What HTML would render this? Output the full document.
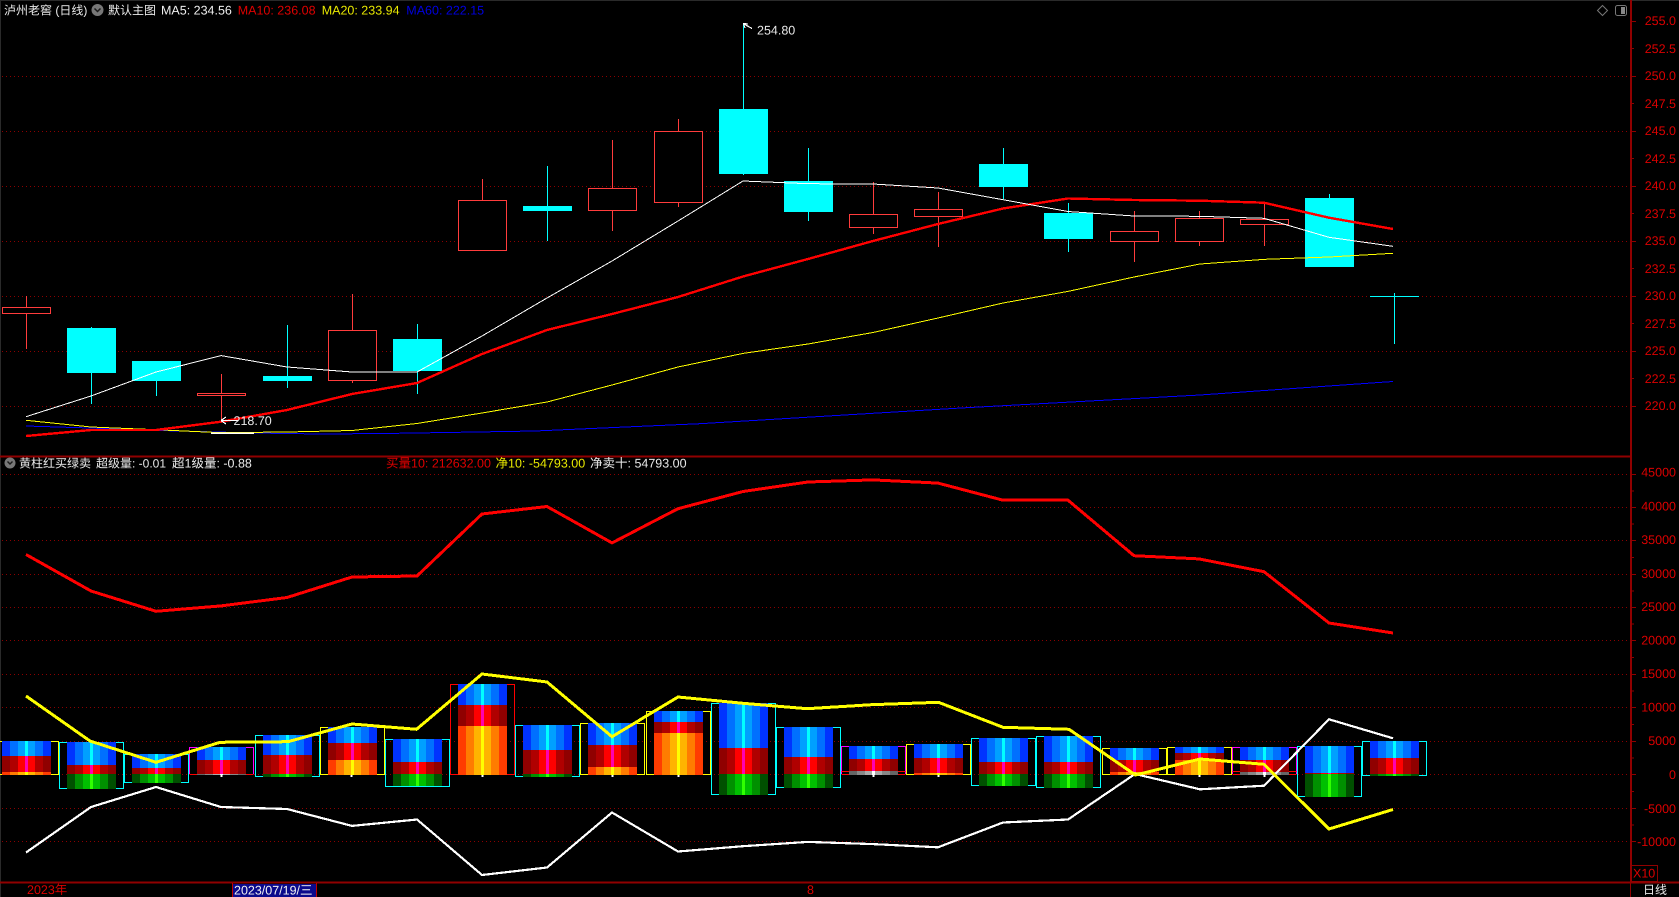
<!DOCTYPE html>
<html><head><meta charset="utf-8"><style>
html,body{margin:0;padding:0;background:#000;width:1679px;height:897px;overflow:hidden}
svg{display:block;shape-rendering:crispEdges}
text{font-family:"Liberation Sans","Noto Sans CJK SC",sans-serif;font-size:12.5px;text-rendering:geometricPrecision;shape-rendering:auto}
.c{font-size:12px}
.a text{fill:#dc0000;text-anchor:end}
</style></head><body>
<svg width="1679" height="897" viewBox="0 0 1679 897" xmlns="http://www.w3.org/2000/svg">
<defs>
<linearGradient id="b"><stop offset="0" stop-color="#0033ff"/><stop offset=".163" stop-color="#0033ff"/><stop offset=".163" stop-color="#0070ff"/><stop offset=".327" stop-color="#0070ff"/><stop offset=".327" stop-color="#00a0ff"/><stop offset=".47" stop-color="#00a0ff"/><stop offset=".47" stop-color="#00ffff"/><stop offset=".53" stop-color="#00ffff"/><stop offset=".53" stop-color="#00a0ff"/><stop offset=".673" stop-color="#00a0ff"/><stop offset=".673" stop-color="#0070ff"/><stop offset=".837" stop-color="#0070ff"/><stop offset=".837" stop-color="#0033ff"/><stop offset="1" stop-color="#0033ff"/></linearGradient>
<linearGradient id="r"><stop offset="0" stop-color="#900000"/><stop offset=".163" stop-color="#900000"/><stop offset=".163" stop-color="#b00000"/><stop offset=".327" stop-color="#b00000"/><stop offset=".327" stop-color="#ff0000"/><stop offset=".47" stop-color="#ff0000"/><stop offset=".47" stop-color="#ff00b0"/><stop offset=".53" stop-color="#ff00b0"/><stop offset=".53" stop-color="#ff0000"/><stop offset=".673" stop-color="#ff0000"/><stop offset=".673" stop-color="#b00000"/><stop offset=".837" stop-color="#b00000"/><stop offset=".837" stop-color="#900000"/><stop offset="1" stop-color="#900000"/></linearGradient>
<linearGradient id="o"><stop offset="0" stop-color="#ff3c00"/><stop offset=".163" stop-color="#ff3c00"/><stop offset=".163" stop-color="#ff7c00"/><stop offset=".327" stop-color="#ff7c00"/><stop offset=".327" stop-color="#ffb400"/><stop offset=".47" stop-color="#ffb400"/><stop offset=".47" stop-color="#ffff00"/><stop offset=".53" stop-color="#ffff00"/><stop offset=".53" stop-color="#ffb400"/><stop offset=".673" stop-color="#ffb400"/><stop offset=".673" stop-color="#ff7c00"/><stop offset=".837" stop-color="#ff7c00"/><stop offset=".837" stop-color="#ff3c00"/><stop offset="1" stop-color="#ff3c00"/></linearGradient>
<linearGradient id="g"><stop offset="0" stop-color="#005000"/><stop offset=".163" stop-color="#005000"/><stop offset=".163" stop-color="#009000"/><stop offset=".327" stop-color="#009000"/><stop offset=".327" stop-color="#00c000"/><stop offset=".47" stop-color="#00c000"/><stop offset=".47" stop-color="#30ff00"/><stop offset=".53" stop-color="#30ff00"/><stop offset=".53" stop-color="#00c000"/><stop offset=".673" stop-color="#00c000"/><stop offset=".673" stop-color="#009000"/><stop offset=".837" stop-color="#009000"/><stop offset=".837" stop-color="#005000"/><stop offset="1" stop-color="#005000"/></linearGradient>
<linearGradient id="w"><stop offset="0" stop-color="#666"/><stop offset=".163" stop-color="#666"/><stop offset=".163" stop-color="#888"/><stop offset=".327" stop-color="#888"/><stop offset=".327" stop-color="#aaa"/><stop offset=".47" stop-color="#aaa"/><stop offset=".47" stop-color="#fff"/><stop offset=".53" stop-color="#fff"/><stop offset=".53" stop-color="#aaa"/><stop offset=".673" stop-color="#aaa"/><stop offset=".673" stop-color="#888"/><stop offset=".837" stop-color="#888"/><stop offset=".837" stop-color="#666"/><stop offset="1" stop-color="#666"/></linearGradient>
</defs>
<rect width="1679" height="897" fill="#000"/>
<rect x="0" y="0" width="1679" height="1" fill="#2a2a2a"/>
<rect x="0" y="0" width="1" height="897" fill="#2a2a2a"/>

<!-- grid -->
<path stroke="#8c0000" stroke-dasharray="1 3" fill="none" d="M2 76.5H1630M2 131.5H1630M2 186.5H1630M2 241.5H1630M2 296.5H1630M2 351.5H1630M2 406.5H1630M2 474.5H1630M2 507.5H1630M2 540.5H1630M2 574.5H1630M2 607.5H1630M2 640.5H1630M2 674.5H1630M2 707.5H1630M2 741.5H1630M2 774.5H1630M2 808.5H1630M2 841.5H1630"/>

<!-- axes -->
<g stroke="#900000" fill="none">
<path stroke-width="2" d="M1631 0V882"/>
<path d="M1630.5 882V897"/>
<path stroke-width="2" d="M0 456.5H1632M0 882.5H1679"/>
<path d="M1632 21.5H1636M1632 48.5H1634M1632 76.5H1636M1632 103.5H1634M1632 131.5H1636M1632 158.5H1634M1632 186.5H1636M1632 213.5H1634M1632 241.5H1636M1632 268.5H1634M1632 296.5H1636M1632 323.5H1634M1632 351.5H1636M1632 378.5H1634M1632 406.5H1636"/>
<path d="M1632 474.5H1636M1632 507.5H1636M1632 540.5H1636M1632 574.5H1636M1632 607.5H1636M1632 640.5H1636M1632 674.5H1636M1632 707.5H1636M1632 741.5H1636M1632 774.5H1636M1632 808.5H1636M1632 841.5H1636M1632 491H1634M1632 524H1634M1632 557.5H1634M1632 591H1634M1632 624H1634M1632 657.5H1634M1632 691H1634M1632 724.5H1634M1632 758H1634M1632 791.5H1634M1632 825H1634"/>
<rect x="1631.5" y="865.5" width="26" height="16"/>
</g>
<g class="a">
<text x="1676" y="25">255.0</text><text x="1676" y="53">252.5</text><text x="1676" y="80">250.0</text><text x="1676" y="108">247.5</text><text x="1676" y="135">245.0</text><text x="1676" y="163">242.5</text><text x="1676" y="190">240.0</text><text x="1676" y="218">237.5</text><text x="1676" y="245">235.0</text><text x="1676" y="273">232.5</text><text x="1676" y="300">230.0</text><text x="1676" y="328">227.5</text><text x="1676" y="355">225.0</text><text x="1676" y="383">222.5</text><text x="1676" y="410">220.0</text>
<text x="1676" y="476.5">45000</text><text x="1676" y="510.5">40000</text><text x="1676" y="544">35000</text><text x="1676" y="578">30000</text><text x="1676" y="611">25000</text><text x="1676" y="644.5">20000</text><text x="1676" y="678">15000</text><text x="1676" y="711.5">10000</text><text x="1676" y="745">5000</text><text x="1676" y="779">0</text><text x="1676" y="813">-5000</text><text x="1676" y="846">-10000</text>
</g>
<text x="1633" y="877.5" fill="#dc0000">X10</text>

<!-- red candles -->
<path stroke="#ff3c3c" fill="none" d="M26.5 296V349M221.5 374V420M352.5 294V383M482.5 179V250M612.5 140V231M678.5 119V207M873.5 182V234M938.5 192V247M1134.5 211V262M1199.5 211V246M1264.5 203V246"/>
<g fill="#000" stroke="#ff3c3c">
<rect x="2.5" y="307.5" width="48" height="6"/>
<rect x="197.5" y="393.5" width="48" height="2"/>
<rect x="328.5" y="330.5" width="48" height="50"/>
<rect x="458.5" y="200.5" width="48" height="50"/>
<rect x="588.5" y="188.5" width="48" height="22"/>
<rect x="654.5" y="131.5" width="48" height="71"/>
<rect x="849.5" y="214.5" width="48" height="13"/>
<rect x="914.5" y="209.5" width="48" height="7"/>
<rect x="1110.5" y="231.5" width="48" height="10"/>
<rect x="1175.5" y="218.5" width="48" height="23"/>
<rect x="1240.5" y="219.5" width="48" height="5"/>
</g>
<!-- cyan candles -->
<path stroke="#00ffff" fill="none" d="M91.5 327V404M156.5 361V396M287.5 325V388M417.5 324V394M547.5 166V241M743.5 23V175M808.5 148V221M1003.5 148V199M1068.5 203V252M1329.5 194V267M1394.5 293V344M1370 296.5H1419"/>
<g fill="#00ffff">
<rect x="67" y="328" width="49" height="45"/>
<rect x="132" y="361" width="49" height="20"/>
<rect x="263" y="376" width="49" height="5"/>
<rect x="393" y="339" width="49" height="32"/>
<rect x="523" y="206" width="49" height="5"/>
<rect x="719" y="109" width="49" height="65"/>
<rect x="784" y="181" width="49" height="31"/>
<rect x="979" y="164" width="49" height="23"/>
<rect x="1044" y="213" width="49" height="26"/>
<rect x="1305" y="198" width="49" height="69"/>
</g>

<!-- MAs -->
<g fill="none">
<polyline stroke="#0000ff" stroke-width="1" points="26,426 90,428 141,430 254,433 321,434 384,433.5 446,432.5 535,431 700,423.7 961,408 1200,395 1393,381.5"/>
<polyline stroke="#ffff00" stroke-width="1" points="26,420.3 91,427 156,429.7 221,432.7 287,432 352,430.5 417,423.5 482,413 547,402 612,385 678,367 743,353.4 808,344 873,332.5 938,318 1003,303 1068,291.4 1134,277 1200,264 1265,259.3 1329,257 1393,253.3"/>
<polyline stroke="#ff0000" stroke-width="2.4" points="26,436 91,430 156,430 221,421.7 287,410 352,394 417,383 482,354 547,330 612,314 678,297 743,276.5 808,259 873,241 938,224 1003,208.5 1068,198.5 1134,200 1200,200.7 1264,202.7 1329,217.7 1393,229"/>
<polyline stroke="#ffffff" stroke-width="1" points="26,416.7 91,396 156,372 221,355.6 287,367 352,372 417,372 482,336 547,298 612,261 678,221 743,181 808,183.7 873,184 938,188 1003,199.7 1068,211.5 1134,216 1199,216.3 1264,218.3 1329,237.3 1393,246.3"/>
<path stroke="#ffffff" stroke-width="1.5" d="M211 433H254"/>
<path stroke="#ffffff" stroke-width="1.2" d="M743 23.5L752 28.5M743.5 23.5L748 24M743.5 23.5L745 28M221 420.5H238M221 420.5L226 417M221 420.5L226 424"/>
</g>
<text x="757" y="34.5" fill="#e8e8e8">254.80</text>
<text x="233.5" y="425" fill="#e8e8e8">218.70</text>

<!-- header -->
<text class="c" x="4" y="14.5" fill="#e8e8e8">泸州老窖 (日线)</text>
<circle cx="97.5" cy="10" r="6" fill="#777" shape-rendering="auto"/>
<path d="M94.5 8.5L97.5 11.5L100.5 8.5" stroke="#1a1a1a" stroke-width="1.5" fill="none" shape-rendering="auto"/>
<text class="c" x="108" y="14.5" fill="#e8e8e8">默认主图</text>
<text x="161" y="14.5" fill="#f0f0f0">MA5: 234.56</text>
<text x="237.7" y="14.5" fill="#e00000">MA10: 236.08</text>
<text x="321.7" y="14.5" fill="#e8e800">MA20: 233.94</text>
<text x="406.3" y="14.5" fill="#0000e0">MA60: 222.15</text>
<path d="M1602.5 5.5L1607.5 10.5L1602.5 15.5L1597.5 10.5Z" stroke="#777" fill="none" shape-rendering="auto"/>
<rect x="1615.5" y="5.5" width="11" height="10" rx="2" stroke="#777" fill="none" shape-rendering="auto"/>
<rect x="1621" y="7" width="4" height="7" fill="#888"/>

<!-- sub header -->
<circle cx="10" cy="463" r="5.5" fill="#777" shape-rendering="auto"/>
<path d="M7.5 461.5L10 464L12.5 461.5" stroke="#1a1a1a" stroke-width="1.4" fill="none" shape-rendering="auto"/>
<text class="c" x="19" y="467.5" fill="#e8e8e8">黄柱红买绿卖</text>
<text class="c" x="96" y="467.5" fill="#e8e8e8">超级量: -0.01</text>
<text x="172" y="467.5" fill="#e8e8e8">超1级量: -0.88</text>
<text x="386" y="467.5" fill="#e00000">买量10: 212632.00</text>
<text x="495.5" y="467.5" fill="#e8e800">净10: -54793.00</text>
<text x="590" y="467.5" fill="#e8e8e8">净卖十: 54793.00</text>

<!-- boxes -->
<g fill="none" stroke="#00ffff">
<rect x="59.5" y="742.5" width="64" height="46"/>
<rect x="124.5" y="754.5" width="64" height="28"/>
<rect x="255.5" y="735.5" width="64" height="41"/>
<rect x="385.5" y="739.5" width="64" height="47"/>
<rect x="515.5" y="725.5" width="64" height="51"/>
<rect x="711.5" y="703.5" width="64" height="91"/>
<rect x="776.5" y="727.5" width="64" height="60"/>
<rect x="971.5" y="738.5" width="64" height="47"/>
<rect x="1036.5" y="736.5" width="64" height="51"/>
<rect x="1297.5" y="746.5" width="64" height="50"/>
<rect x="1362.5" y="741.5" width="64" height="34"/>
</g>
<g fill="none" stroke="#ffff00">
<rect x="-5.5" y="741.5" width="64" height="33"/>
<rect x="320.5" y="727.5" width="64" height="47"/>
<rect x="580.5" y="723.5" width="64" height="51"/>
<rect x="646.5" y="711.5" width="64" height="63"/>
<rect x="906.5" y="744.5" width="64" height="30"/>
<rect x="1102.5" y="748.5" width="64" height="26"/>
<rect x="1167.5" y="747.5" width="64" height="27"/>
</g>
<g fill="none" stroke="#ff00ff">
<path d="M189.5 774V747.5H253.5V774"/>
<path d="M841.5 774V746.5H905.5V774"/>
<path d="M1232.5 774V747.5H1296.5V774"/>
</g>
<g fill="none" stroke="#ff0000">
<rect x="450.5" y="684.5" width="64" height="90"/>
<path d="M189.5 774.5H253.5M841.5 774.5H905.5M841.5 771.5H905.5M1232.5 774.5H1296.5M1232.5 771.5H1296.5"/>
</g>

<!-- bars -->
<g fill="url(#b)">
<rect x="2" y="741" width="49" height="15"/>
<rect x="67" y="742" width="49" height="23"/>
<rect x="132" y="754" width="49" height="14"/>
<rect x="197" y="747" width="49" height="13"/>
<rect x="263" y="735" width="49" height="20"/>
<rect x="328" y="727" width="49" height="16"/>
<rect x="393" y="739" width="49" height="23"/>
<rect x="458" y="684" width="49" height="21"/>
<rect x="523" y="725" width="49" height="25"/>
<rect x="588" y="723" width="49" height="22"/>
<rect x="654" y="711" width="49" height="11"/>
<rect x="719" y="703" width="49" height="45"/>
<rect x="784" y="727" width="49" height="30"/>
<rect x="849" y="746" width="49" height="13"/>
<rect x="914" y="744" width="49" height="14"/>
<rect x="979" y="738" width="49" height="24"/>
<rect x="1044" y="736" width="49" height="26"/>
<rect x="1110" y="748" width="49" height="12"/>
<rect x="1175" y="747" width="49" height="6"/>
<rect x="1240" y="747" width="49" height="13"/>
<rect x="1305" y="746" width="49" height="27"/>
<rect x="1370" y="741" width="49" height="17"/>
</g>
<g fill="url(#r)">
<rect x="2" y="756" width="49" height="16"/>
<rect x="67" y="765" width="49" height="9"/>
<rect x="132" y="768" width="49" height="6"/>
<rect x="197" y="760" width="49" height="15"/>
<rect x="263" y="755" width="49" height="19"/>
<rect x="328" y="743" width="49" height="17"/>
<rect x="393" y="762" width="49" height="12"/>
<rect x="458" y="705" width="49" height="21"/>
<rect x="523" y="750" width="49" height="24"/>
<rect x="588" y="745" width="49" height="22"/>
<rect x="654" y="722" width="49" height="11"/>
<rect x="719" y="748" width="49" height="26"/>
<rect x="784" y="757" width="49" height="17"/>
<rect x="849" y="759" width="49" height="12"/>
<rect x="914" y="758" width="49" height="15"/>
<rect x="979" y="762" width="49" height="12"/>
<rect x="1044" y="762" width="49" height="12"/>
<rect x="1110" y="760" width="49" height="12"/>
<rect x="1175" y="753" width="49" height="7"/>
<rect x="1240" y="760" width="49" height="12"/>
<rect x="1305" y="773" width="49" height="1"/>
<rect x="1370" y="758" width="49" height="16"/>
</g>
<g fill="url(#o)">
<rect x="2" y="772" width="49" height="3"/>
<rect x="328" y="760" width="49" height="15"/>
<rect x="458" y="726" width="49" height="49"/>
<rect x="588" y="767" width="49" height="8"/>
<rect x="654" y="733" width="49" height="42"/>
<rect x="914" y="773" width="49" height="2"/>
<rect x="1110" y="772" width="49" height="3"/>
<rect x="1175" y="760" width="49" height="15"/>
</g>
<g fill="url(#g)">
<rect x="67" y="774" width="49" height="15"/>
<rect x="132" y="774" width="49" height="9"/>
<rect x="263" y="774" width="49" height="3"/>
<rect x="393" y="774" width="49" height="12"/>
<rect x="523" y="774" width="49" height="3"/>
<rect x="719" y="774" width="49" height="21"/>
<rect x="784" y="774" width="49" height="14"/>
<rect x="979" y="774" width="49" height="12"/>
<rect x="1044" y="774" width="49" height="14"/>
<rect x="1305" y="774" width="49" height="23"/>
<rect x="1370" y="774" width="49" height="2"/>
</g>
<g fill="url(#w)">
<rect x="849" y="771" width="49" height="4"/>
<rect x="1240" y="772" width="49" height="3"/>
<rect x="197" y="774" width="49" height="1"/>
</g>
<path stroke="#fff" stroke-width="2" d="M221.5 775V777M351.5 775V777M482.5 775V777M612.5 775V777M678.5 775V777M873.5 775V777M938.5 775V777M1199.5 775V777M1264.5 775V777"/>

<!-- indicator lines -->
<g fill="none">
<polyline stroke="#ff0000" stroke-width="3" points="26,554.5 91,591 156,611.3 221,605.9 287,597.5 352,577 417,576 482,514 547,506.5 612,542.9 678,508.7 743,491.5 808,482 873,479.9 938,483.1 1003,500.2 1068,500.2 1134,555.7 1199,558.9 1264,571.7 1329,623 1393,633"/>
<polyline stroke="#ffffff" stroke-width="2.2" points="26,852.5 91,807 156,787 221,807 287,809 352,825.9 417,819.5 482,875 547,867.5 612,812.5 678,851.5 743,846.2 808,841.9 873,844.1 938,847.3 1003,822.5 1068,819.5 1135,774 1200,789.3 1264,785.7 1329,719.3 1393,738.3"/>
<polyline stroke="#ffff00" stroke-width="3" points="26,696 90,741 156,762.3 220,742.3 288,741.7 352,724 416.5,729.3 482,674 547,682 612,736.7 678,697 743,703.3 807,708.7 871.5,704.7 938.5,702.3 1003,727.3 1069,729.3 1135.5,775 1200,759 1264,764.3 1329,829 1393,809.5"/>
</g>

<!-- bottom axis -->
<text x="27" y="894" fill="#dc0000">2023年</text>
<rect x="233" y="884" width="83" height="13" fill="#0a0a8c"/>
<path stroke="#c00000" d="M232.5 883V897M316.5 883V897"/>
<text x="234" y="894.5" fill="#f0f0f0">2023/07/19/三</text>
<text x="807" y="894" fill="#dc0000">8</text>
<text class="c" x="1643" y="894" fill="#e8e8e8">日线</text>
</svg>
</body></html>
